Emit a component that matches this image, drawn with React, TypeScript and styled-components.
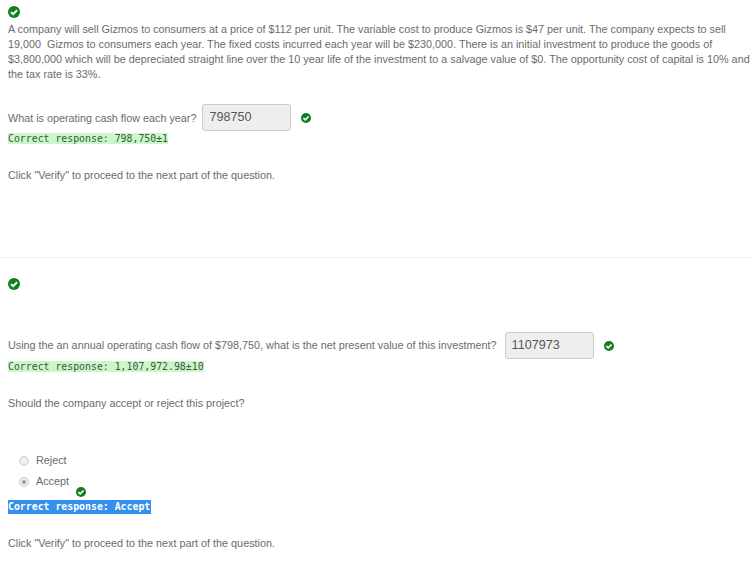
import styled, { createGlobalStyle } from "styled-components";

const GlobalStyle = createGlobalStyle`
  html, body {
    margin: 0;
    padding: 0;
    background: #fff;
  }
  body {
    font-family: "Liberation Sans", Arial, sans-serif;
    font-size: 10.8px;
    line-height: 15px;
    color: #6b6b6b;
  }
`;

const CheckIcon = ({ size }: { size: number }) => (
  <svg width={size} height={size} viewBox="0 0 14 14" aria-hidden="true">
    <circle cx="7" cy="7" r="7" fill="#0f7f1f" />
    <path d="M3.4 7.1 L5.9 9.6 L10.6 4.9" fill="none" stroke="#fff" strokeWidth="2.3" />
  </svg>
);

const App = () => {
  return (
    <Page>
      <GlobalStyle />
      <TopMark>
        <CheckIcon size={12} />
      </TopMark>
      <Intro>
        A company will sell Gizmos to consumers at a price of $112 per unit. The variable cost to
        produce Gizmos is $47 per unit. The company expects to sell
        <br />
        19,000&nbsp; Gizmos to consumers each year. The fixed costs incurred each year will be
        $230,000. There is an initial investment to produce the goods of
        <br />
        $3,800,000 which will be depreciated straight line over the 10 year life of the investment
        to a salvage value of $0. The opportunity cost of capital is 10% and
        <br />
        the tax rate is 33%.
      </Intro>

      <QuestionRow $top={22}>
        <QuestionText $drop={1}>What is operating cash flow each year?</QuestionText>
        <AnswerBox $gap={6}>798750</AnswerBox>
        <RowMark>
          <CheckIcon size={10} />
        </RowMark>
      </QuestionRow>
      <ResponseLine>
        <Response>Correct response: 798,750±1</Response>
      </ResponseLine>
      <Note $top={23}>Click "Verify" to proceed to the next part of the question.</Note>

      <Divider />

      <SectionMark>
        <CheckIcon size={12} />
      </SectionMark>

      <QuestionRow $top={41}>
        <QuestionText>
          Using the an annual operating cash flow of $798,750, what is the net present value of this
          investment?
        </QuestionText>
        <AnswerBox $gap={8}>1107973</AnswerBox>
        <RowMark>
          <CheckIcon size={10} />
        </RowMark>
      </QuestionRow>
      <ResponseLine>
        <Response>Correct response: 1,107,972.98±10</Response>
      </ResponseLine>
      <Note $top={23}>Should the company accept or reject this project?</Note>

      <Choices>
        <Choice>
          <Radio />
          Reject
        </Choice>
        <Choice>
          <Radio $checked />
          Accept
        </Choice>
      </Choices>
      <ChoiceMark>
        <CheckIcon size={10} />
      </ChoiceMark>
      <ResponseLine>
        <Response $selected>Correct response: Accept</Response>
      </ResponseLine>
      <Note $top={22}>Click "Verify" to proceed to the next part of the question.</Note>
    </Page>
  );
};

export default App;

const Page = styled.div`
  width: 752px;
  height: 565px;
  overflow: hidden;
  box-sizing: border-box;
  padding: 6px 0 0 8px;
`;

const TopMark = styled.div`
  display: flex;
  height: 13px;
`;

const Intro = styled.p`
  margin: 3px 0 0;
  white-space: nowrap;
`;

const QuestionRow = styled.div<{ $top: number }>`
  display: flex;
  align-items: center;
  height: 27px;
  margin-top: ${(props) => props.$top}px;
  white-space: nowrap;
`;

const QuestionText = styled.span<{ $drop?: number }>`
  padding-top: ${(props) => (props.$drop ?? 0) * 2}px;
`;

const AnswerBox = styled.div<{ $gap: number }>`
  width: 89px;
  height: 27px;
  box-sizing: border-box;
  margin-left: ${(props) => props.$gap}px;
  padding: 0 6px;
  border: 1px solid #ccc;
  border-radius: 3px;
  background: #eee;
  font-size: 12.6px;
  line-height: 24px;
  color: #555;
`;

const RowMark = styled.span`
  display: flex;
  margin-left: 10px;
`;

const ResponseLine = styled.div`
  display: flex;
  height: 14px;
`;

const Response = styled.code<{ $selected?: boolean }>`
  display: block;
  font-family: "DejaVu Sans Mono", "Liberation Mono", monospace;
  font-size: 9.85px;
  line-height: ${(props) => (props.$selected ? "14px" : "11px")};
  height: ${(props) => (props.$selected ? "14px" : "11px")};
  margin-top: ${(props) => (props.$selected ? "0" : "2px")};
  padding-right: ${(props) => (props.$selected ? "1px" : "0")};
  background: ${(props) => (props.$selected ? "#3390ec" : "#c9f7c9")};
  color: ${(props) => (props.$selected ? "#fff" : "#3c5a3c")};
  font-weight: ${(props) => (props.$selected ? 700 : 400)};
`;

const Note = styled.p<{ $top: number }>`
  margin: ${(props) => props.$top}px 0 0;
`;

const Divider = styled.hr`
  width: 752px;
  margin: 74px 0 0 -8px;
  border: 0;
  border-top: 1px solid #eee;
`;

const SectionMark = styled.div`
  display: flex;
  height: 13px;
  margin-top: 20px;
`;

const Choices = styled.div`
  display: flex;
  flex-direction: column;
  gap: 6px;
  margin: 42px 0 0 11px;
`;

const Choice = styled.label`
  display: flex;
  align-items: center;
  gap: 7px;
`;

const Radio = styled.span<{ $checked?: boolean }>`
  display: flex;
  align-items: center;
  justify-content: center;
  width: 8px;
  height: 8px;
  border: 1px solid #ccc;
  border-radius: 50%;
  background: #eee;

  &::after {
    content: "";
    display: ${(props) => (props.$checked ? "block" : "none")};
    width: 4px;
    height: 4px;
    border-radius: 50%;
    background: #999;
  }
`;

const ChoiceMark = styled.div`
  display: flex;
  height: 13px;
  margin: -2px 0 0 68px;
`;
